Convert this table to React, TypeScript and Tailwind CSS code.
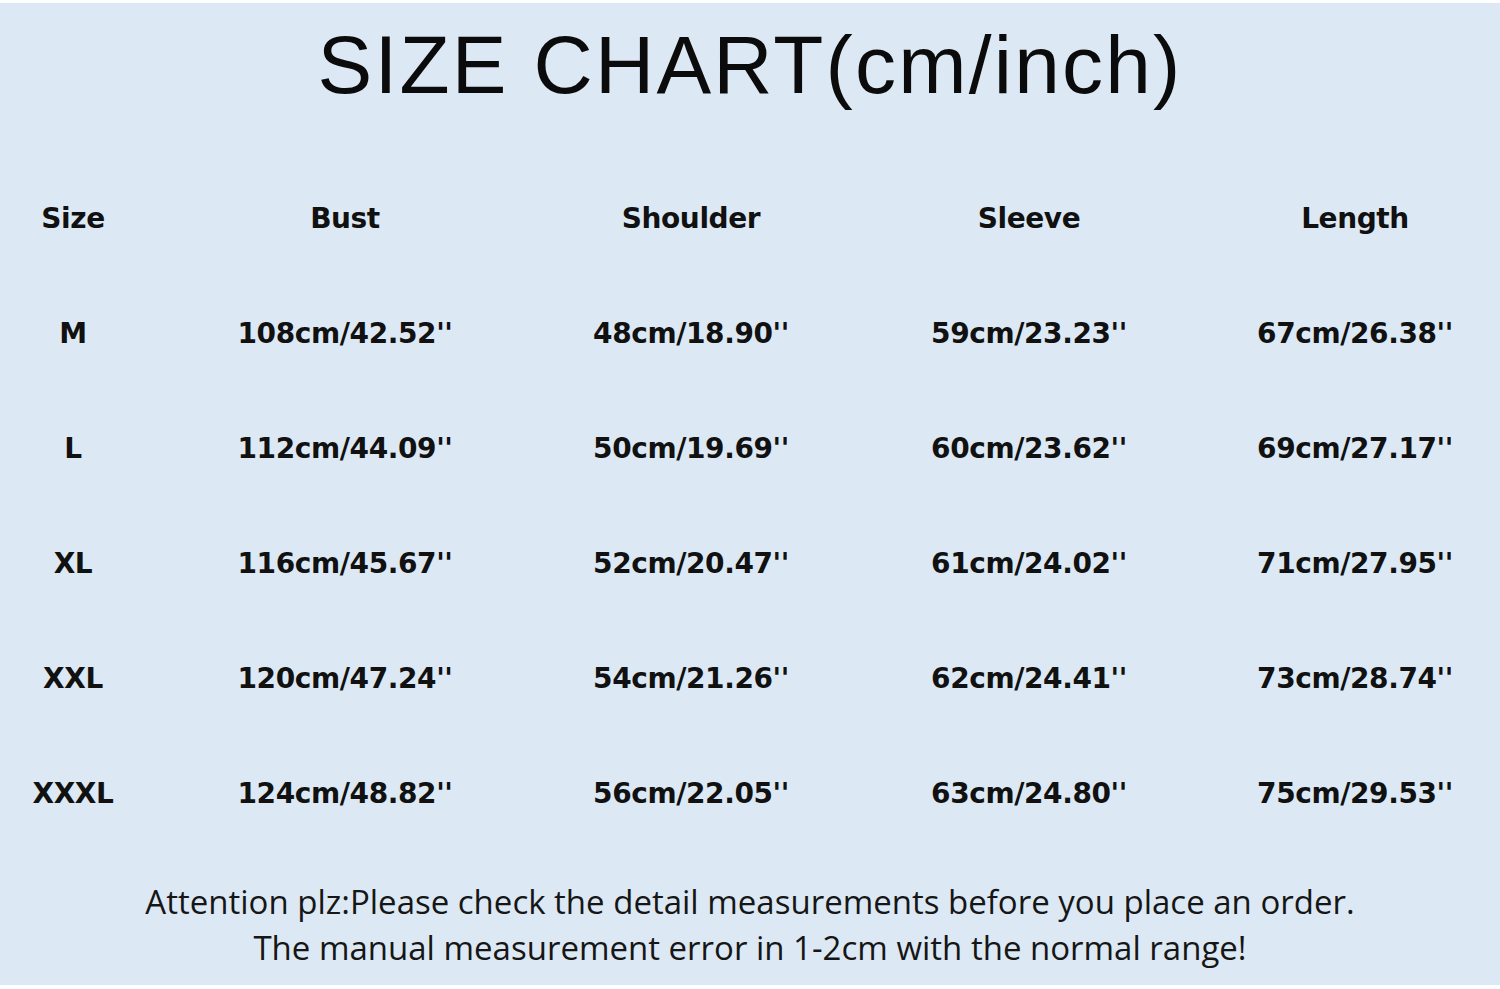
import React from "react";

const header = ["Size", "Bust", "Shoulder", "Sleeve", "Length"];
const rows = [
  ["M", "108cm/42.52''", "48cm/18.90''", "59cm/23.23''", "67cm/26.38''"],
  ["L", "112cm/44.09''", "50cm/19.69''", "60cm/23.62''", "69cm/27.17''"],
  ["XL", "116cm/45.67''", "52cm/20.47''", "61cm/24.02''", "71cm/27.95''"],
  ["XXL", "120cm/47.24''", "54cm/21.26''", "62cm/24.41''", "73cm/28.74''"],
  ["XXXL", "124cm/48.82''", "56cm/22.05''", "63cm/24.80''", "75cm/29.53''"],
];

function Row({ cells }: { cells: string[] }) {
  return (
    <div className="grid grid-cols-[146px_398px_294px_382px_270px] h-[115px] items-center">
      {cells.map((c, i) => (
        <div
          key={i}
          className="text-center font-bold text-[#111] text-[28px] tracking-[-0.4px] whitespace-nowrap"
          style={{ fontFamily: '"DejaVu Sans", Verdana, sans-serif' }}
        >
          {c}
        </div>
      ))}
    </div>
  );
}

export default function App() {
  return (
    <div className="w-[1500px] h-[989px] bg-[#dce9f5] border-t-[3px] border-b-[4px] border-white overflow-hidden flex flex-col">
      <div className="h-[158px] pt-[21px] flex justify-center">
        <div
          className="text-[82px] leading-[81px] text-[#0b0b0b] tracking-[2.2px]"
          style={{ fontFamily: '"Liberation Sans", Arial, sans-serif' }}
        >
          SIZE CHART(cm/inch)
        </div>
      </div>
      <Row cells={header} />
      {rows.map((r, i) => (
        <Row key={i} cells={r} />
      ))}
      <div
        className="pt-[28px] text-center text-[33px] leading-[46px] text-[#161616]"
        style={{ fontFamily: '"Open Sans", "Noto Sans", sans-serif' }}
      >
        <div>Attention plz:Please check the detail measurements before you place an order.</div>
        <div>The manual measurement error in 1-2cm with the normal range!</div>
      </div>
    </div>
  );
}
